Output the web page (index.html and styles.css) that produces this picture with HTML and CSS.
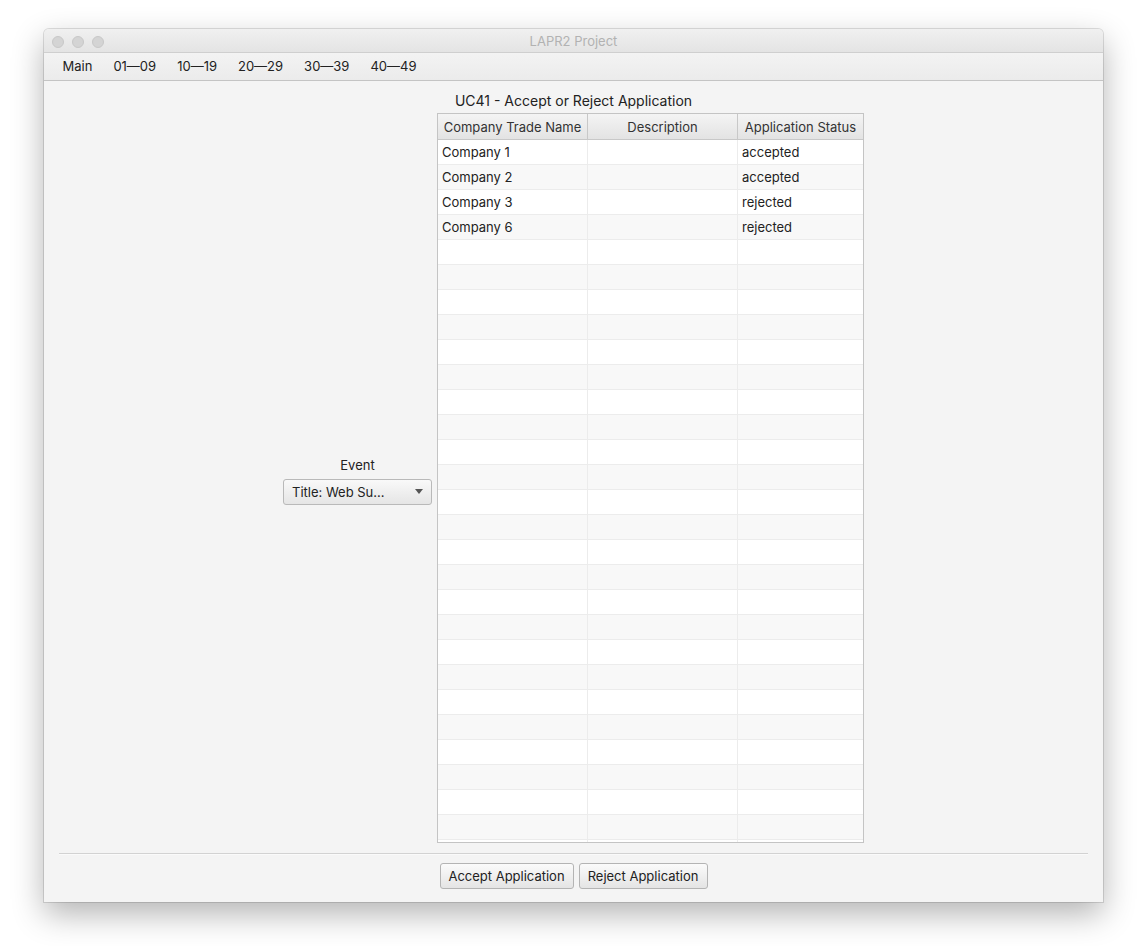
FILE: index.html
```html
<!DOCTYPE html>
<html>
<head>
<meta charset="utf-8">
<title>LAPR2 Project</title>
<link rel="stylesheet" href="styles.css">
</head>
<body>
<div class="window">
  <div class="titlebar">
    <div class="lights">
      <span class="light"></span><span class="light"></span><span class="light"></span>
    </div>
    <div class="wtitle">LAPR2 Project</div>
  </div>
  <div class="menubar">
    <span class="menu">Main</span>
    <span class="menu">01—09</span>
    <span class="menu">10—19</span>
    <span class="menu">20—29</span>
    <span class="menu">30—39</span>
    <span class="menu">40—49</span>
  </div>
  <div class="content">
    <div class="heading">UC41 - Accept or Reject Application</div>
    <div class="middle">
      <div class="left">
        <div class="event">
          <div class="event-label">Event</div>
          <div class="combo">
            <span class="combo-text">Title: Web Su...</span>
            <span class="arrow"></span>
          </div>
        </div>
      </div>
      <div class="table">
        <div class="thead">
          <div class="th c1">Company Trade Name</div>
          <div class="th c2">Description</div>
          <div class="th c3">Application Status</div>
        </div>
        <div class="tbody">
          <div class="tr"><div class="td c1">Company 1</div><div class="td c2"></div><div class="td c3">accepted</div></div>
          <div class="tr"><div class="td c1">Company 2</div><div class="td c2"></div><div class="td c3">accepted</div></div>
          <div class="tr"><div class="td c1">Company 3</div><div class="td c2"></div><div class="td c3">rejected</div></div>
          <div class="tr"><div class="td c1">Company 6</div><div class="td c2"></div><div class="td c3">rejected</div></div>
          <div class="tr"><div class="td c1"></div><div class="td c2"></div><div class="td c3"></div></div>
          <div class="tr"><div class="td c1"></div><div class="td c2"></div><div class="td c3"></div></div>
          <div class="tr"><div class="td c1"></div><div class="td c2"></div><div class="td c3"></div></div>
          <div class="tr"><div class="td c1"></div><div class="td c2"></div><div class="td c3"></div></div>
          <div class="tr"><div class="td c1"></div><div class="td c2"></div><div class="td c3"></div></div>
          <div class="tr"><div class="td c1"></div><div class="td c2"></div><div class="td c3"></div></div>
          <div class="tr"><div class="td c1"></div><div class="td c2"></div><div class="td c3"></div></div>
          <div class="tr"><div class="td c1"></div><div class="td c2"></div><div class="td c3"></div></div>
          <div class="tr"><div class="td c1"></div><div class="td c2"></div><div class="td c3"></div></div>
          <div class="tr"><div class="td c1"></div><div class="td c2"></div><div class="td c3"></div></div>
          <div class="tr"><div class="td c1"></div><div class="td c2"></div><div class="td c3"></div></div>
          <div class="tr"><div class="td c1"></div><div class="td c2"></div><div class="td c3"></div></div>
          <div class="tr"><div class="td c1"></div><div class="td c2"></div><div class="td c3"></div></div>
          <div class="tr"><div class="td c1"></div><div class="td c2"></div><div class="td c3"></div></div>
          <div class="tr"><div class="td c1"></div><div class="td c2"></div><div class="td c3"></div></div>
          <div class="tr"><div class="td c1"></div><div class="td c2"></div><div class="td c3"></div></div>
          <div class="tr"><div class="td c1"></div><div class="td c2"></div><div class="td c3"></div></div>
          <div class="tr"><div class="td c1"></div><div class="td c2"></div><div class="td c3"></div></div>
          <div class="tr"><div class="td c1"></div><div class="td c2"></div><div class="td c3"></div></div>
          <div class="tr"><div class="td c1"></div><div class="td c2"></div><div class="td c3"></div></div>
          <div class="tr"><div class="td c1"></div><div class="td c2"></div><div class="td c3"></div></div>
          <div class="tr"><div class="td c1"></div><div class="td c2"></div><div class="td c3"></div></div>
          <div class="tr"><div class="td c1"></div><div class="td c2"></div><div class="td c3"></div></div>
          <div class="tr"><div class="td c1"></div><div class="td c2"></div><div class="td c3"></div></div>
          <div class="tr"><div class="td c1"></div><div class="td c2"></div><div class="td c3"></div></div>
          <div class="tr"><div class="td c1"></div><div class="td c2"></div><div class="td c3"></div></div>
        </div>
      </div>
      <div class="right"></div>
    </div>
    <div class="separator"></div>
    <div class="buttons">
      <button class="btn btn-accept">Accept Application</button>
      <button class="btn btn-reject">Reject Application</button>
    </div>
  </div>
</div>
</body>
</html>
```

FILE: styles.css
```css
html, body {
  margin: 0;
  padding: 0;
  background: #ffffff;
}
body {
  width: 1146px;
  height: 946px;
  overflow: hidden;
  font-family: Inter, "Liberation Sans", Arial, sans-serif;
  font-size: 13px;
  color: #222;
}
.window {
  margin-left: 44px;
  margin-top: 29px;
  width: 1059px;
  height: 873px;
  background: #f4f4f4;
  border-radius: 5px 5px 0 0;
  box-shadow: 0 0 0 1px rgba(0,0,0,0.12), 0 12px 32px rgba(0,0,0,0.30);
  display: flex;
  flex-direction: column;
  overflow: hidden;
}
.titlebar {
  height: 23px;
  flex: none;
  background: linear-gradient(#f0f0f0, #e4e4e4);
  border-bottom: 1px solid #cfcfcf;
  display: flex;
  align-items: center;
  position: relative;
}
.lights {
  display: flex;
  gap: 8px;
  padding-left: 8px;
  padding-top: 2px;
}
.light {
  width: 12px;
  height: 12px;
  box-sizing: border-box;
  border-radius: 50%;
  background: #d4d4d4;
  border: 1px solid #c8c8c8;
}
.wtitle {
  position: absolute;
  left: 0;
  right: 0;
  top: 1px;
  text-align: center;
  color: #b2b2b2;
  font-size: 13px;
  line-height: 23px;
}
.menubar {
  height: 27px;
  flex: none;
  background: linear-gradient(#f3f3f3, #ebebeb);
  border-bottom: 1px solid #c4c4c4;
  display: flex;
  align-items: center;
  padding-left: 8px;
  padding-bottom: 1px;
  box-sizing: border-box;
  height: 28px;
}
.menu {
  padding: 0 10.5px;
  color: #222;
  font-size: 13px;
}
.content {
  flex: 1;
  display: flex;
  flex-direction: column;
  padding: 8px 15px 13px;
}
.heading {
  text-align: center;
  line-height: 23px;
  height: 24px;
  font-size: 14px;
  color: #222;
}
.middle {
  display: grid;
  grid-template-columns: 378px 426px 1fr;
  margin-left: -15px;
  margin-right: -15px;
  padding-left: 15px;
  height: 730px;
}
.left {
  display: flex;
  align-items: center;
  justify-content: flex-end;
  padding-right: 5px;
}
.event {
  display: flex;
  flex-direction: column;
  align-items: center;
  margin-top: 5px;
}
.event-label {
  line-height: 16px;
  margin-bottom: 6px;
  color: #222;
}
.combo {
  height: 24px;
  border: 1px solid #b9b9b9;
  border-radius: 3px;
  background: linear-gradient(#f9f9f9, #e5e5e5);
  display: flex;
  align-items: center;
  justify-content: space-between;
  padding: 0 8px 0 8px;
  box-sizing: content-box;
  width: 131px;
}
.combo-text {
  color: #222;
}
.arrow {
  width: 0;
  height: 0;
  border-left: 4.5px solid transparent;
  border-right: 4.5px solid transparent;
  border-top: 5px solid #555;
}
.table {
  border: 1px solid #c4c4c4;
  background: #ffffff;
  overflow: hidden;
  display: flex;
  flex-direction: column;
  box-sizing: border-box;
  width: 427px;
}
.thead {
  display: flex;
  height: 25px;
  flex: none;
  background: linear-gradient(#f4f4f4, #e3e3e3);
  border-bottom: 1px solid #c8c8c8;
}
.th {
  text-align: center;
  line-height: 26px;
  color: #333;
  border-right: 1px solid #c8c8c8;
  box-sizing: border-box;
  white-space: nowrap;
}
.th.c3 { border-right: none; }
.c1 { width: 150px; flex: none; }
.c2 { width: 150px; flex: none; }
.c3 { flex: 1; }
.tbody {
  flex: 1;
  overflow: hidden;
}
.tr {
  display: flex;
  height: 25px;
  border-bottom: 1px solid #ececec;
  box-sizing: border-box;
  background: #ffffff;
}
.tr:nth-child(even) {
  background: #f8f8f8;
}
.td {
  line-height: 25px;
  padding-left: 4px;
  box-sizing: border-box;
  border-right: 1px solid #ececec;
  color: #222;
  white-space: nowrap;
}
.td.c3 { border-right: none; }
.separator {
  margin-top: 10px;
  height: 1px;
  background: #d2d2d2;
  border-bottom: 1px solid #fafafa;
}
.buttons {
  margin-top: 8px;
  display: flex;
  justify-content: center;
  gap: 5px;
}
.btn {
  height: 26px;
  border: 1px solid #b4b4b4;
  border-radius: 3px;
  background: linear-gradient(#fbfbfb, #e4e4e4);
  font-family: Inter, "Liberation Sans", Arial, sans-serif;
  font-size: 13px;
  color: #222;
  padding: 0 4px;
  margin: 0;
}
.btn-accept { width: 134px; }
.btn-reject { width: 129px; }
```
